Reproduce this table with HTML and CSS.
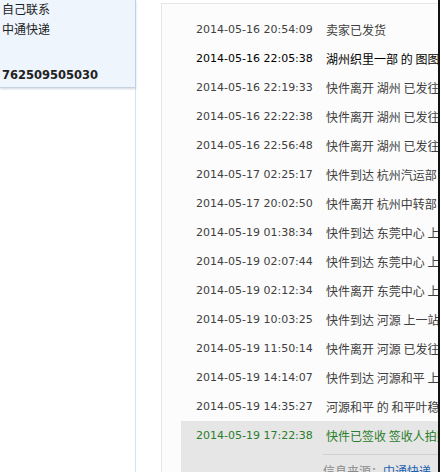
FILE: index.html
```html
<!DOCTYPE html>
<html lang="zh-CN">
<head>
<meta charset="utf-8">
<title>物流信息</title>
<link rel="stylesheet" href="styles.css">
</head>
<body>
<div class="page">
  <aside class="side">
    <div class="side-panel">
      <div class="side-line">自己联系</div>
      <div class="side-line">中通快递</div>
      <div class="side-num">762509505030</div>
    </div>
  </aside>
  <main class="track">
    <ul class="list">
      <li class="row"><span class="time">2014-05-16 20:54:09</span><span class="desc">卖家已发货</span></li>
      <li class="row hover"><span class="time">2014-05-16 22:05:38</span><span class="desc">湖州织里一部 的 图图</span></li>
      <li class="row"><span class="time">2014-05-16 22:19:33</span><span class="desc">快件离开 湖州 已发往</span></li>
      <li class="row"><span class="time">2014-05-16 22:22:38</span><span class="desc">快件离开 湖州 已发往</span></li>
      <li class="row"><span class="time">2014-05-16 22:56:48</span><span class="desc">快件离开 湖州 已发往</span></li>
      <li class="row"><span class="time">2014-05-17 02:25:17</span><span class="desc">快件到达 杭州汽运部</span></li>
      <li class="row"><span class="time">2014-05-17 20:02:50</span><span class="desc">快件离开 杭州中转部</span></li>
      <li class="row"><span class="time">2014-05-19 01:38:34</span><span class="desc">快件到达 东莞中心 上</span></li>
      <li class="row"><span class="time">2014-05-19 02:07:44</span><span class="desc">快件到达 东莞中心 上</span></li>
      <li class="row"><span class="time">2014-05-19 02:12:34</span><span class="desc">快件离开 东莞中心 上</span></li>
      <li class="row"><span class="time">2014-05-19 10:03:25</span><span class="desc">快件到达 河源 上一站</span></li>
      <li class="row"><span class="time">2014-05-19 11:50:14</span><span class="desc">快件离开 河源 已发往</span></li>
      <li class="row"><span class="time">2014-05-19 14:14:07</span><span class="desc">快件到达 河源和平 上</span></li>
      <li class="row"><span class="time">2014-05-19 14:35:27</span><span class="desc">河源和平 的 和平叶稳</span></li>
      <li class="last">
        <div class="row done"><span class="time">2014-05-19 17:22:38</span><span class="desc">快件已签收 签收人拍照签收</span></div>
        <div class="source">信息来源：<a class="src-link" href="#">中通快递</a></div>
      </li>
    </ul>
  </main>
  <div class="edge"></div>
</div>
</body>
</html>
```

FILE: styles.css
```css
html, body {
  margin: 0;
  padding: 0;
  background: #ffffff;
}
body {
  width: 441px;
  height: 472px;
  overflow: hidden;
  font-family: "DejaVu Sans", "Noto Sans CJK SC", sans-serif;
  font-size: 12px;
  color: #404040;
}
.page {
  display: flex;
  height: 472px;
}
.side {
  width: 135px;
  flex: none;
  border-right: 1px solid #d4e2f1;
}
.side-panel {
  height: 87px;
  background: #eef5fd;
  border-bottom: 1px solid #c7d3df;
  box-shadow: 0 1px 2px rgba(120, 140, 165, 0.35);
  margin-right: -1px;
  border-right: 1px solid #bcd2ea;
  padding-left: 2px;
  color: #222;
  font-family: "Noto Sans CJK SC", sans-serif;
}
.side-line {
  height: 20px;
  line-height: 17px;
  font-size: 12px;
}
.side-num {
  margin-top: 27px;
  font-family: "DejaVu Sans", sans-serif;
  font-weight: bold;
  font-size: 11.5px;
  line-height: 16px;
  color: #222;
}
.track {
  flex: 1;
  margin-left: 25px;
  margin-top: 3px;
  border-top: 1px solid #e6e6e6;
  border-left: 1px solid #e6e6e6;
  background: #fcfcfc;
  min-width: 0;
  overflow: hidden;
}
.list {
  list-style: none;
  margin: 0;
  padding: 11px 0 0 19px;
}
.row {
  display: flex;
  height: 29px;
  align-items: center;
  padding-left: 15px;
  white-space: nowrap;
}
.time {
  width: 130px;
  flex: none;
  font-family: "DejaVu Sans", sans-serif;
  font-size: 11px;
}
.desc {
  font-family: "Noto Sans CJK SC", sans-serif;
  font-size: 12px;
}
.hover {
  color: #000;
}
.last {
  background: #e6e6e6;
  height: 60px;
}
.done {
  color: #2a7d2a;
}
.source {
  margin-left: 142px;
  margin-top: 4px;
  border-top: 1px solid #cfcfcf;
  padding-top: 7px;
  font-family: "Noto Sans CJK SC", sans-serif;
  font-size: 12px;
  color: #8a8a8a;
  white-space: nowrap;
}
.src-link {
  color: #1c62b0;
  text-decoration: none;
}
.edge {
  width: 3px;
  flex: none;
  border-left: 2px solid #111;
  box-sizing: border-box;
}
```
